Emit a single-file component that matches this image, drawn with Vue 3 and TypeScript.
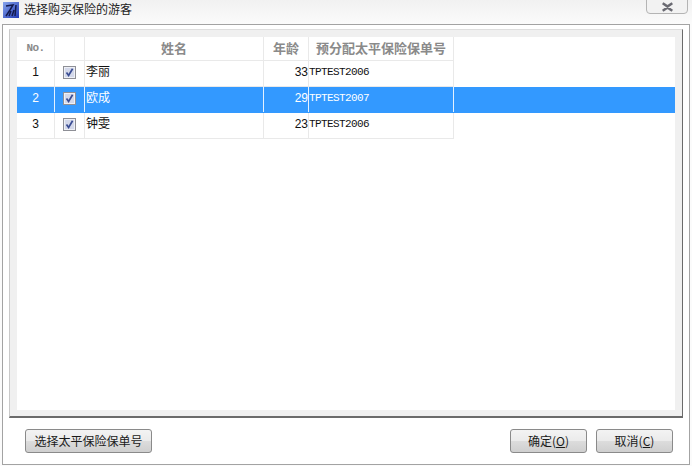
<script setup lang="ts">
interface Row { no: number; name: string; age: number; code: string; sel?: boolean }
const rows: Row[] = [
  { no: 1, name: '李丽', age: 33, code: 'TPTEST2006' },
  { no: 2, name: '欧成', age: 29, code: 'TPTEST2007', sel: true },
  { no: 3, name: '钟雯', age: 23, code: 'TPTEST2006' },
]
</script>

<template>
  <div class="win">
    <div class="title">
      <svg class="logo" width="16" height="16" viewBox="0 0 16 16">
        <defs>
          <linearGradient id="lg" x1="0" y1="0" x2="1" y2="1">
            <stop offset="0" stop-color="#86a4ec" />
            <stop offset="1" stop-color="#2038b4" />
          </linearGradient>
        </defs>
        <rect width="16" height="16" fill="url(#lg)" />
        <path d="M3 4 L10 3 L7 8 L3 14 M8 9 L6 14 M11 8 L9 14 M13 3 L12 14" stroke="#131a4d" stroke-width="1.5" fill="none" />
      </svg>
      <span class="title-text">选择购买保险的游客</span>
      <div class="close">
        <svg width="13" height="10" viewBox="0 0 13 10">
          <path d="M2 1 L6.5 4 L11 1 M2 9 L6.5 6 L11 9 M1.5 1.5 L11.5 8.5 M11.5 1.5 L1.5 8.5" stroke="#6a6a72" stroke-width="1.6" fill="none" />
        </svg>
      </div>
    </div>
    <div class="body">
      <div class="panel">
        <div class="grid">
          <div class="row head">
            <div class="c c1 mono">No.</div>
            <div class="c c2"></div>
            <div class="c c3">姓名</div>
            <div class="c c4">年龄</div>
            <div class="c c5">预分配太平保险保单号</div>
          </div>
          <div v-for="r in rows" :key="r.no" class="row" :class="{ sel: r.sel }">
            <div class="c c1 num">{{ r.no }}</div>
            <div class="c c2">
              <svg width="13" height="13" viewBox="0 0 13 13">
                <rect x="0.5" y="0.5" width="12" height="12" fill="#eef0f6" stroke="#8e8f96" />
                <rect x="2" y="2" width="9" height="9" fill="#d3d8ea" />
                <path d="M3.5 6.5 L5.6 9.5 L9.6 2.8" stroke="#3a4d93" stroke-width="1.7" fill="none" />
              </svg>
            </div>
            <div class="c c3 name">{{ r.name }}</div>
            <div class="c c4 age">{{ r.age }}</div>
            <div class="c c5 code">{{ r.code }}</div>
          </div>
        </div>
      </div>
      <div class="actions">
        <button class="btn wide">选择太平保险保单号</button>
        <div class="right">
          <button class="btn">确定(<u>O</u>)</button>
          <button class="btn">取消(<u>C</u>)</button>
        </div>
      </div>
    </div>
  </div>
</template>

<style>
html, body { margin: 0; background: #fff; }
</style>

<style scoped>
.win {
  width: 692px;
  height: 466px;
  box-sizing: border-box;
  background: linear-gradient(180deg, #f1f1f1 0, #fbfbfb 24px);
  font-family: "Noto Sans CJK SC", "Liberation Sans", sans-serif;
  overflow: hidden;
}
.title {
  height: 24px;
  display: flex;
  align-items: flex-start;
  padding-left: 3px;
  position: relative;
}
.logo { margin-top: 2px; }
.title-text {
  margin-left: 5px;
  font-size: 12px;
  line-height: 17px;
  color: #222;
}
.close {
  position: absolute;
  right: 4px;
  top: -4px;
  width: 42px;
  height: 18px;
  box-sizing: border-box;
  border: 1px solid #b4b4b4;
  border-radius: 0 0 4px 4px;
  background: #f2f2f2;
  display: flex;
  align-items: center;
  justify-content: center;
  padding-top: 4px;
}
.body {
  margin: 0 2px;
  height: 441px;
  box-sizing: border-box;
  background: #fff;
  border: 1px solid #a3a3a3;
  padding: 4px 6px 0;
}
.panel {
  height: 389px;
  box-sizing: border-box;
  background: #f0f0f0;
  border-top: 1px solid #dedede;
  border-left: 1px solid #c9c9c9;
  border-right: 1px solid #6b6b6b;
  border-bottom: 2px solid #6b6b6b;
  padding: 7px 7px 6px 7px;
}
.grid {
  height: 100%;
  background: #fff;
}
.row {
  display: flex;
  height: 26px;
  box-sizing: border-box;
  border-bottom: 1px solid #e9e9e9;
  font-size: 12px;
  line-height: 22px;
  color: #111;
}
.row.head {
  height: 24px;
  line-height: 22px;
  color: #8a8a8a;
  font-weight: 700;
  font-size: 13px;
  width: 437px;
}
.row.head .c { padding-bottom: 2px; }
.row:not(.head):not(.sel) { width: 437px; }
.row.sel {
  background: #3399ff;
  color: #fff;
  border-bottom-color: transparent;
}
.c {
  box-sizing: border-box;
  border-right: 1px solid #e9e9e9;
  text-align: center;
  white-space: nowrap;
  overflow: hidden;
  display: flex;
  align-items: center;
  justify-content: center;
}
.row:not(.head) .c { padding-bottom: 4px; }
.row:not(.head) .c2 { padding-bottom: 2px; }
.row:not(.head) .name { padding-bottom: 5px; }
.sel .c { border-right-color: #e4f1ff; }
.c1 { width: 38px; }
.c2 { width: 30px; }
.c3 { width: 179px; }
.c4 { width: 45px; }
.c5 { width: 145px; }
.mono { font-family: "Liberation Mono", monospace; font-size: 11px; letter-spacing: -0.6px; }
.num { font-family: "Liberation Sans", sans-serif; font-size: 12px; }
.name { justify-content: flex-start; font-size: 12px; padding-left: 1px; }
.age {
  justify-content: flex-end;
  font-family: "Liberation Sans", sans-serif;
  font-size: 12px;
}
.code {
  justify-content: flex-start;
  font-family: "Liberation Mono", monospace;
  font-size: 11px;
  letter-spacing: -0.6px;
}
.actions {
  display: flex;
  justify-content: space-between;
  padding: 11px 10px 0 16px;
}
.right { display: flex; gap: 9px; }
.btn {
  width: 77px;
  height: 24px;
  padding: 0;
  box-sizing: border-box;
  border: 1px solid #8a8a8a;
  border-radius: 3px;
  background: linear-gradient(180deg, #f3f3f3 0, #ebebeb 48%, #dcdcdc 52%, #cfcfcf 100%);
  font-family: "Noto Sans CJK SC", "Liberation Sans", sans-serif;
  font-size: 12px;
  line-height: 20px;
  color: #1a1a1a;
}
.btn.wide { width: 127px; }
</style>
